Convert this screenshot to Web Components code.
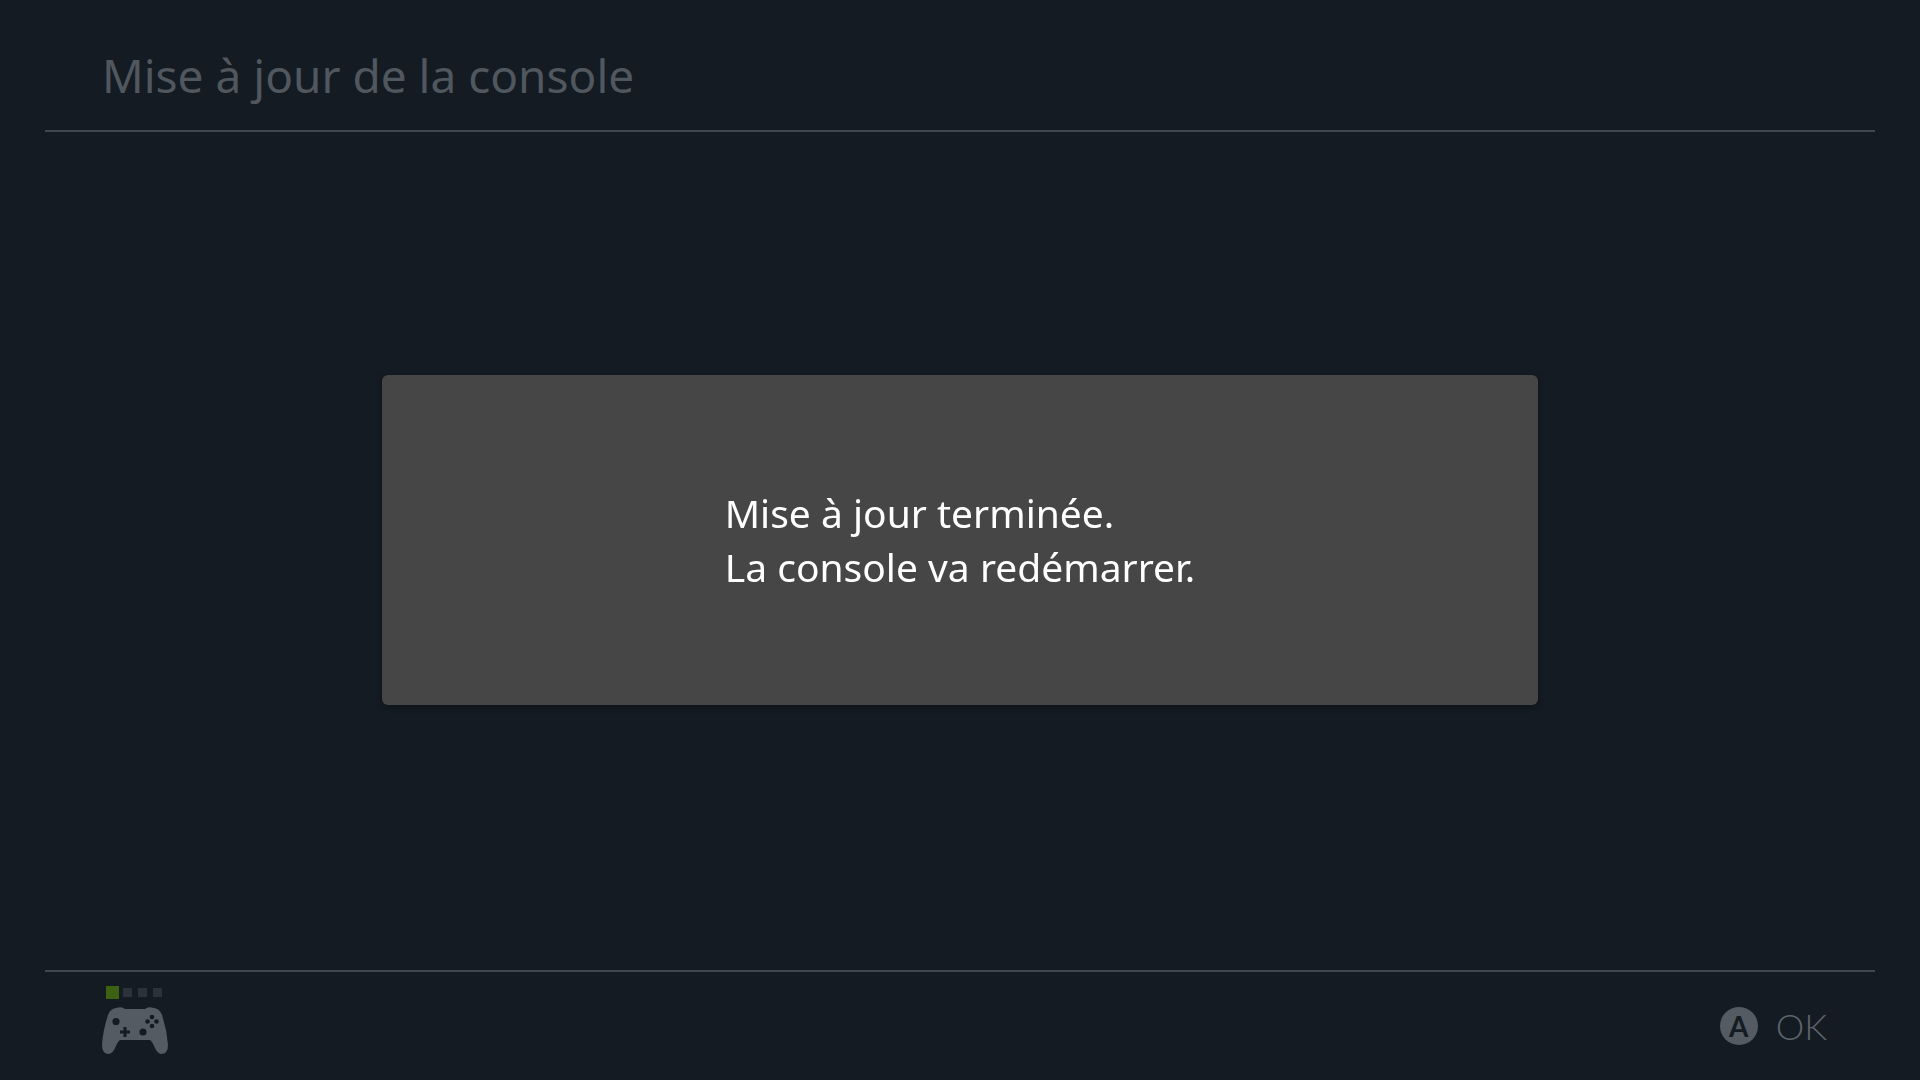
<!DOCTYPE html>
<html lang="fr">
<head>
<meta charset="utf-8">
<meta name="viewport" content="width=device-width, initial-scale=1">
<title>Mise à jour de la console</title>
<style>
  :root {
    --background: #141b22;
    --line: #40474f;
    --muted: #50575e;
    --icon: #545b63;
    --label: #5c636b;
    --panel: #464646;
    --player-on: #3d6112;
    --player-off: #2b323a;
  }

  body {
    margin: 0;
    background-color: var(--background);
    color: var(--muted);
    font-family: "Noto Sans", "Open Sans", sans-serif;
  }
</style>
</head>
<body>
<console-screen>
  <screen-header slot="header">Mise à jour de la console</screen-header>
  <message-dialog>Mise à jour terminée.<br>La console va redémarrer.</message-dialog>
  <screen-footer slot="footer">
    <controller-status player="1"></controller-status>
    <button-hint slot="hints" key="A">OK</button-hint>
  </screen-footer>
</console-screen>

<script>
const screenTemplate = document.createElement("template");
screenTemplate.innerHTML = `
  <slot name="header"></slot>
  <main><slot></slot></main>
  <slot name="footer"></slot>
  <style>
    :host {
      display: grid;
      grid-template-rows: auto 1fr auto;
      min-height: 100vh;
      box-sizing: border-box;
      padding: 0 45px;
    }
  </style>
`;

const headerTemplate = document.createElement("template");
headerTemplate.innerHTML = `
  <h1><slot></slot></h1>
  <style>
    :host {
      display: block;
      border-bottom: 2px solid var(--line);
      padding: 43px 57px 23px;
    }

    h1 {
      margin: 0;
      font-size: 46px;
      font-weight: 400;
      line-height: 64px;
    }
  </style>
`;

const dialogTemplate = document.createElement("template");
dialogTemplate.innerHTML = `
  <section role="alertdialog" aria-labelledby="message">
    <p id="message"><slot></slot></p>
  </section>
  <style>
    :host {
      position: fixed;
      inset: 0;
      display: grid;
      place-items: center;
      pointer-events: none;
    }

    section {
      display: flex;
      justify-content: center;
      width: 60.2%;
      box-sizing: border-box;
      padding: 111px 40px;
      border-radius: 6px;
      background-color: var(--panel);
      box-shadow: 0 2px 6px rgba(0, 0, 0, 0.3);
      pointer-events: auto;
    }

    p {
      margin: 0;
      color: white;
      font-size: 39px;
      font-weight: 400;
      line-height: 54px;
    }
  </style>
`;

const footerTemplate = document.createElement("template");
footerTemplate.innerHTML = `
  <footer>
    <slot></slot>
    <slot name="hints"></slot>
  </footer>
  <style>
    :host {
      display: block;
      border-top: 2px solid var(--line);
    }

    footer {
      display: flex;
      align-items: center;
      justify-content: space-between;
      height: 108px;
      padding: 0 48px 0 57px;
    }
  </style>
`;

const controllerTemplate = document.createElement("template");
controllerTemplate.innerHTML = `
  <div class="players"><i></i><i></i><i></i><i></i></div>
  <svg width="66" height="47" viewBox="0 0 66 47" aria-hidden="true">
    <path class="pad" d="M14 1 Q20 -1 23 2 H43 Q46 -1 52 1 Q58 2 60 8 Q65 23 66 38 Q66 47 59 47 Q55 46 53 41 Q50 34 48 33 H18 Q16 34 13 41 Q11 46 7 47 Q0 47 0 38 Q1 23 6 8 Q8 2 14 1Z"/>
    <circle cx="14" cy="14.5" r="3.6"/>
    <circle cx="41" cy="25" r="3.6"/>
    <path d="M21.5 20h3v3.5h3.5v3h-3.5v3.5h-3v-3.5h-3.5v-3h3.5z"/>
    <circle cx="50" cy="10" r="2.3"/>
    <circle cx="50" cy="19" r="2.3"/>
    <circle cx="45.5" cy="14.5" r="2.3"/>
    <circle cx="54.5" cy="14.5" r="2.3"/>
  </svg>
  <style>
    :host {
      display: grid;
      gap: 9px;
      padding-bottom: 12px;
    }

    .players {
      display: flex;
      align-items: center;
      gap: 6px;
      height: 12px;
      padding-left: 6px;
    }

    i {
      width: 9px;
      height: 9px;
      background-color: var(--player-off);
    }

    i.on {
      background-color: var(--player-on);
      box-shadow: 0 0 0 2px var(--player-on);
    }

    svg {
      display: block;
      fill: var(--background);
    }

    .pad {
      fill: var(--icon);
    }
  </style>
`;

const hintTemplate = document.createElement("template");
hintTemplate.innerHTML = `
  <button type="button">
    <span class="key"></span>
    <span class="label"><slot></slot></span>
  </button>
  <style>
    :host {
      display: block;
    }

    button {
      display: flex;
      align-items: center;
      gap: 18px;
      padding: 0;
      border: 0;
      background: none;
      color: var(--label);
      font-family: Lato, sans-serif;
      cursor: pointer;
    }

    .key {
      width: 38px;
      height: 38px;
      border-radius: 50%;
      background-color: var(--icon);
      color: var(--background);
      font-size: 28px;
      font-weight: 700;
      line-height: 38px;
      text-align: center;
    }

    .label {
      font-size: 36px;
      font-weight: 300;
      line-height: 42px;
    }
  </style>
`;

class BaseComponent extends HTMLElement {
  connectedCallback() {
    if (!this.shadowRoot) {
      const shadowRoot = this.attachShadow({ mode: "open" });
      shadowRoot.appendChild(this.constructor.template.content.cloneNode(true));
    }
    this.render();
  }

  render() {
  }
}

class ConsoleScreen extends BaseComponent {
  static template = screenTemplate;
}

class ScreenHeader extends BaseComponent {
  static template = headerTemplate;
}

class MessageDialog extends BaseComponent {
  static template = dialogTemplate;
}

class ScreenFooter extends BaseComponent {
  static template = footerTemplate;
}

class ControllerStatus extends BaseComponent {
  static template = controllerTemplate;

  render() {
    const player = Number(this.getAttribute("player"));
    this.shadowRoot.querySelectorAll("i").forEach((light, index) => {
      light.classList.toggle("on", index + 1 === player);
    });
  }
}

class ButtonHint extends BaseComponent {
  static template = hintTemplate;

  render() {
    this.shadowRoot.querySelector(".key").textContent = this.getAttribute("key");
  }
}

customElements.define("console-screen", ConsoleScreen);
customElements.define("screen-header", ScreenHeader);
customElements.define("message-dialog", MessageDialog);
customElements.define("screen-footer", ScreenFooter);
customElements.define("controller-status", ControllerStatus);
customElements.define("button-hint", ButtonHint);
</script>
</body>
</html>
